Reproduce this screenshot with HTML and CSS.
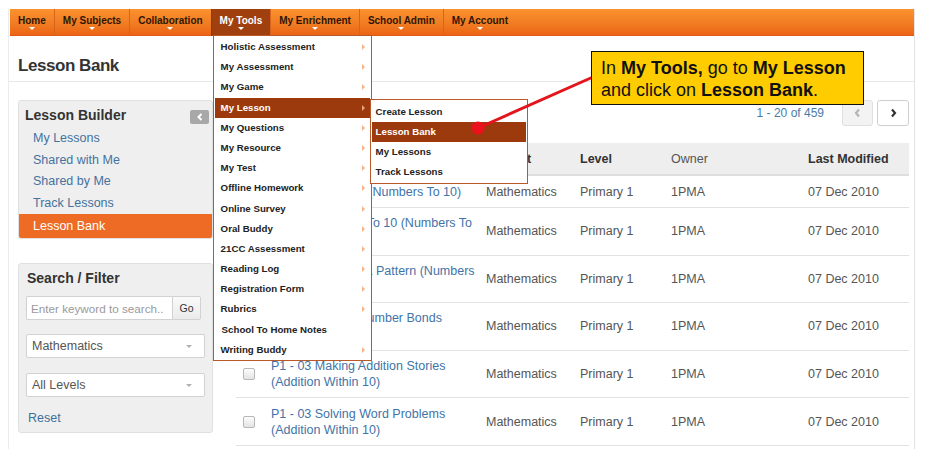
FILE: index.html
```html
<!DOCTYPE html>
<html lang="en">
<head>
<meta charset="utf-8">
<title>Lesson Bank</title>
<link rel="stylesheet" href="styles.css">
</head>
<body>
<div class="page">
  <nav class="topnav">
    <ul class="nav-list">
      <li class="nav-item"><span>Home</span><i class="caret"></i></li>
      <li class="nav-item"><span>My Subjects</span><i class="caret"></i></li>
      <li class="nav-item"><span>Collaboration</span><i class="caret"></i></li>
      <li class="nav-item active"><span>My Tools</span><i class="caret"></i>
        <ul class="menu">
          <li class="menu-item has-sub">Holistic Assessment</li>
          <li class="menu-item has-sub">My Assessment</li>
          <li class="menu-item has-sub">My Game</li>
          <li class="menu-item has-sub current">My Lesson
            <ul class="submenu">
              <li class="submenu-item">Create Lesson</li>
              <li class="submenu-item current">Lesson Bank</li>
              <li class="submenu-item">My Lessons</li>
              <li class="submenu-item">Track Lessons</li>
            </ul>
          </li>
          <li class="menu-item has-sub">My Questions</li>
          <li class="menu-item has-sub">My Resource</li>
          <li class="menu-item has-sub">My Test</li>
          <li class="menu-item has-sub">Offline Homework</li>
          <li class="menu-item has-sub">Online Survey</li>
          <li class="menu-item has-sub">Oral Buddy</li>
          <li class="menu-item has-sub">21CC Assessment</li>
          <li class="menu-item has-sub">Reading Log</li>
          <li class="menu-item has-sub">Registration Form</li>
          <li class="menu-item has-sub">Rubrics</li>
          <li class="menu-item plain">School To Home Notes</li>
          <li class="menu-item has-sub">Writing Buddy</li>
        </ul>
      </li>
      <li class="nav-item"><span>My Enrichment</span><i class="caret"></i></li>
      <li class="nav-item"><span>School Admin</span><i class="caret"></i></li>
      <li class="nav-item"><span>My Account</span><i class="caret"></i></li>
    </ul>
  </nav>

  <header class="page-head"><h1>Lesson Bank</h1></header>

  <div class="layout">
    <aside class="sidebar">
      <section class="panel builder">
        <div class="panel-head">
          <h2 class="panel-title">Lesson Builder</h2>
          <span class="collapse-btn"><svg width="6" height="8" viewBox="0 0 6 8"><polyline points="4.5,1 1.5,4 4.5,7" fill="none" stroke="#fff" stroke-width="2"/></svg></span>
        </div>
        <ul class="side-links">
          <li class="side-link">My Lessons</li>
          <li class="side-link">Shared with Me</li>
          <li class="side-link">Shared by Me</li>
          <li class="side-link">Track Lessons</li>
          <li class="side-link active">Lesson Bank</li>
        </ul>
      </section>

      <section class="panel filter">
        <h2 class="panel-title">Search / Filter</h2>
        <div class="search-group">
          <input class="search-input" type="text" placeholder="Enter keyword to search..">
          <button class="go-btn" type="button">Go</button>
        </div>
        <div class="select"><span>Mathematics</span><i class="select-caret"></i></div>
        <div class="select second"><span>All Levels</span><i class="select-caret"></i></div>
        <div class="reset">Reset</div>
      </section>
    </aside>

    <main class="main">
      <div class="pager">
        <span class="pager-count">1 - 20 of 459</span>
        <span class="page-btn prev"><svg width="7" height="10" viewBox="0 0 7 10"><polyline points="5,1.5 2,5 5,8.5" fill="none" stroke="#b5b5b5" stroke-width="2.2"/></svg></span>
        <span class="page-btn next"><svg width="7" height="10" viewBox="0 0 7 10"><polyline points="2,1.5 5,5 2,8.5" fill="none" stroke="#333" stroke-width="2.2"/></svg></span>
      </div>

      <table class="lessons">
        <colgroup>
          <col class="c-check"><col class="c-title"><col class="c-subject"><col class="c-level"><col class="c-owner"><col class="c-date">
        </colgroup>
        <thead>
          <tr><th></th><th>Title</th><th>Subject</th><th>Level</th><th class="light">Owner</th><th>Last Modified</th></tr>
        </thead>
        <tbody>
          <tr class="single"><td class="cell-check"><input class="check" type="checkbox"></td><td class="title">P1 - 01 Counting (Numbers To 10)</td><td>Mathematics</td><td>Primary 1</td><td>1PMA</td><td>07 Dec 2010</td></tr>
          <tr><td class="cell-check"><input class="check" type="checkbox"></td><td class="title">P1 - 01 Ordering To 10 (Numbers To<br>10)</td><td>Mathematics</td><td>Primary 1</td><td>1PMA</td><td>07 Dec 2010</td></tr>
          <tr><td class="cell-check"><input class="check" type="checkbox"></td><td class="title">P1 - 02 Creating a Pattern (Numbers<br>To 10)</td><td>Mathematics</td><td>Primary 1</td><td>1PMA</td><td>07 Dec 2010</td></tr>
          <tr><td class="cell-check"><input class="check" type="checkbox"></td><td class="title">P1 - 03 Making Number Bonds<br>(Numbers To 10)</td><td>Mathematics</td><td>Primary 1</td><td>1PMA</td><td>07 Dec 2010</td></tr>
          <tr><td class="cell-check"><input class="check" type="checkbox"></td><td class="title">P1 - 03 Making Addition Stories<br>(Addition Within 10)</td><td>Mathematics</td><td>Primary 1</td><td>1PMA</td><td>07 Dec 2010</td></tr>
          <tr><td class="cell-check"><input class="check" type="checkbox"></td><td class="title">P1 - 03 Solving Word Problems<br>(Addition Within 10)</td><td>Mathematics</td><td>Primary 1</td><td>1PMA</td><td>07 Dec 2010</td></tr>
        </tbody>
      </table>
    </main>
  </div>
</div>

<svg class="pointer" width="925" height="457" viewBox="0 0 925 457">
  <line x1="478" y1="128" x2="593" y2="77" stroke="#e3141c" stroke-width="3"/>
  <circle cx="478" cy="128" r="6.5" fill="#ec121c"/>
</svg>

<div class="callout">In <b>My Tools,</b> go to <b>My Lesson</b><br>and click on <b>Lesson Bank</b>.</div>
</body>
</html>
```

FILE: styles.css
```css
* { box-sizing: border-box; }

html, body { margin: 0; padding: 0; }

body {
  position: relative;
  width: 925px;
  height: 457px;
  overflow: hidden;
  background: #fff;
  font-family: "Liberation Sans", Arial, sans-serif;
  color: #333;
}

ul { list-style: none; margin: 0; padding: 0; }

.page {
  margin: 9px 0 0 8px;
  width: 907px;
  height: 440px;
  border-left: 1px solid #ececec;
  border-right: 1px solid #e2e2e2;
}

/* ---------- top navigation ---------- */
.topnav {
  margin-left: 1px;
  height: 27px;
  background: linear-gradient(#fb922f, #f07a22 60%, #ec6415);
  border-bottom: 1px solid #e15c12;
}

.nav-list { display: flex; height: 27px; }

.nav-item {
  position: relative;
  display: flex;
  flex-direction: column;
  align-items: center;
  height: 27px;
  padding: 6px 8px 0;
  border-left: 1px solid #d8631c;
  font-size: 10px;
  font-weight: bold;
  line-height: 12px;
  color: #2e1604;
  white-space: nowrap;
}
.nav-item:first-child { border-left: none; }
.nav-item.active { background: #a1400f; color: #fff; border-left-color: #8e380d; }

.caret {
  display: block;
  width: 0;
  height: 0;
  margin-top: 0;
  border-left: 3px solid transparent;
  border-right: 3px solid transparent;
  border-top: 3px solid #fff;
}

/* ---------- dropdown ---------- */
.menu {
  position: absolute;
  left: 1px;
  top: 26px;
  z-index: 10;
  width: 159px;
  padding-top: 1px;
  background: #fff;
  border: 1px solid #b9582b;
  color: #222;
}

.menu-item {
  position: relative;
  height: 20.2px;
  margin: 0 1px;
  padding-left: 6px;
  font-size: 9.7px;
  font-weight: bold;
  line-height: 20.2px;
  color: #222;
}
.menu-item.plain { padding-left: 7px; }
.menu-item.has-sub::after {
  content: "";
  position: absolute;
  right: 5px;
  top: 7px;
  border-left: 3px solid #f5b489;
  border-top: 3px solid transparent;
  border-bottom: 3px solid transparent;
}
.menu-item.current { background: #9c3a0d; color: #fff; }
.menu-item.current::after { border-left-color: #e9a27c; }

.submenu {
  position: absolute;
  left: 100%;
  top: 1px;
  z-index: 11;
  width: 158px;
  padding-top: 2px;
  background: #fff;
  border: 1px solid #b9582b;
}

.submenu-item {
  height: 20.3px;
  margin: 0 1px;
  padding-left: 4px;
  font-size: 9.7px;
  font-weight: bold;
  line-height: 20.3px;
  color: #222;
}
.submenu-item.current { background: #9c3a0d; color: #fff; }

/* ---------- page heading ---------- */
.page-head {
  height: 46px;
  padding: 20px 9px 0;
  border-bottom: 1px solid #e8e8e8;
}
.page-head h1 {
  margin: 0;
  font-size: 17px;
  font-weight: bold;
  line-height: 20px;
  letter-spacing: -0.45px;
  color: #333;
}

/* ---------- layout ---------- */
.layout {
  display: flex;
  align-items: flex-start;
  gap: 23px;
  padding: 18px 5px 0 9px;
}

.sidebar { width: 195px; flex: none; }

.panel {
  background: #efefef;
  border: 1px solid #e0e0e0;
  border-radius: 3px;
}

.panel-title {
  margin: 0;
  font-size: 14px;
  font-weight: bold;
  line-height: 18px;
  color: #333;
}

.builder { padding-top: 5px; overflow: hidden; }

.panel-head {
  display: flex;
  justify-content: space-between;
  align-items: flex-start;
  height: 18px;
  margin-bottom: 4px;
  padding: 0 3px 0 6px;
}

.collapse-btn {
  display: flex;
  align-items: center;
  justify-content: center;
  width: 19px;
  height: 14px;
  margin-top: 4px;
  background: #a8a8a8;
  border-radius: 2px;
}

.side-link {
  padding-left: 14px;
  font-size: 12.5px;
  line-height: 21.5px;
  color: #44729e;
}
.side-link.active {
  line-height: 24px;
  background: #ee6b25;
  color: #fff;
}

.filter {
  margin-top: 24px;
  padding: 5px 7px 4px;
}
.filter .panel-title { padding-left: 1px; margin-bottom: 9px; }

.search-group { display: flex; width: 175px; height: 24px; }

.search-input {
  flex: 1;
  min-width: 0;
  height: 24px;
  margin: 0;
  padding: 0 3px 0 4px;
  border: 1px solid #d2d2d2;
  border-right: none;
  border-radius: 2px 0 0 2px;
  background: #fff;
  font-family: "Liberation Sans", Arial, sans-serif;
  font-size: 11.7px;
  color: #555;
  outline: none;
}
.search-input::placeholder { color: #9a9a9a; }

.go-btn {
  width: 29px;
  height: 24px;
  margin: 0;
  padding: 0;
  border: 1px solid #d2d2d2;
  border-radius: 0 2px 2px 0;
  background: linear-gradient(#fafafa, #ebebeb);
  font-family: "Liberation Sans", Arial, sans-serif;
  font-size: 10.5px;
  color: #333;
}

.select {
  display: flex;
  align-items: center;
  justify-content: space-between;
  height: 24px;
  margin-top: 14px;
  padding: 0 12px 0 5px;
  background: #fff;
  border: 1px solid #d2d2d2;
  border-radius: 2px;
  font-size: 12.5px;
  color: #555;
}
.select.second { margin-top: 15px; }

.select-caret {
  width: 0;
  height: 0;
  border-left: 3px solid transparent;
  border-right: 3px solid transparent;
  border-top: 3px solid #b0b0b0;
}

.reset {
  margin-top: 11px;
  padding-left: 2px;
  font-size: 12.5px;
  line-height: 20px;
  color: #3d6f9c;
}

/* ---------- main ---------- */
.main { width: 673px; flex: none; }

.pager {
  display: flex;
  justify-content: flex-end;
  align-items: center;
  height: 26px;
}
.pager-count {
  margin-right: 18px;
  font-size: 12px;
  color: #4a7aa6;
}
.page-btn {
  display: flex;
  align-items: center;
  justify-content: center;
  width: 31px;
  height: 26px;
  border: 1px solid #d6d6d6;
  border-radius: 3px;
  background: #fff;
}
.page-btn.prev { background: #f3f3f3; border-color: #e0e0e0; }
.page-btn.next { width: 32px; margin-left: 4px; border-color: #cfcfcf; }

.lessons {
  width: 673px;
  margin-top: 17px;
  border-collapse: collapse;
  table-layout: fixed;
  font-size: 12.5px;
  color: #555;
}
.c-check { width: 27px; }
.c-title { width: 215px; }
.c-subject { width: 94px; }
.c-level { width: 91px; }
.c-owner { width: 137px; }
.c-date { width: 109px; }

.lessons th {
  height: 32px;
  padding: 0 8px;
  background: #eee;
  border-bottom: 2px solid #dedede;
  text-align: left;
  font-weight: bold;
  color: #333;
  white-space: nowrap;
}
.lessons th.light { font-weight: normal; color: #555; }

.lessons td {
  padding: 7.3px 8px;
  line-height: 16px;
  border-bottom: 1px solid #e2e2e2;
  vertical-align: middle;
  white-space: nowrap;
}
.lessons td.cell-check { padding-left: 7px; padding-right: 0; }
.lessons td.title { color: #3f74a8; }
.lessons tr.single td { padding-top: 7.5px; padding-bottom: 7.5px; }

.check {
  appearance: none;
  -webkit-appearance: none;
  display: block;
  width: 12px;
  height: 12px;
  margin: 0;
  border: 1px solid #b8b8b8;
  border-radius: 2px;
  background: linear-gradient(#fdfdfd, #e4e4e4);
}

/* ---------- annotation ---------- */
.pointer {
  position: absolute;
  left: 0;
  top: 0;
  z-index: 20;
  pointer-events: none;
}

.callout {
  position: absolute;
  left: 591px;
  top: 51px;
  z-index: 21;
  width: 273px;
  height: 54px;
  padding: 5px 0 0 9px;
  background: #ffcc00;
  border: 1px solid #111;
  font-size: 18px;
  line-height: 22px;
  color: #111;
  white-space: nowrap;
}
```
